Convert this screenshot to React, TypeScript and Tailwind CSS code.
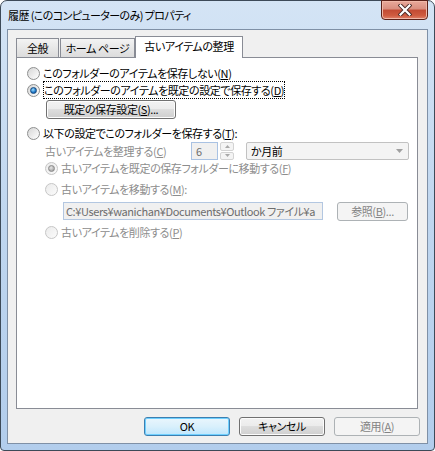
import React from "react";

const jp = "font-['Meiryo_UI','Noto_Sans_CJK_JP',sans-serif] [font-feature-settings:'palt']";

const Radio = ({ checked = false, disabled = false }: { checked?: boolean; disabled?: boolean }) => (
  <span
    className={
      disabled
        ? "w-[13px] h-[13px] rounded-full border border-[#c6c6c6] bg-gradient-to-br from-[#ebebeb] to-[#fbfbfb] flex items-center justify-center shrink-0"
        : "w-[13px] h-[13px] rounded-full border border-[#8e8f8f] bg-gradient-to-br from-[#d6d6d6] to-[#ffffff] flex items-center justify-center shrink-0"
    }
  >
    {checked && (
      <span
        className={
          disabled
            ? "w-[7px] h-[7px] rounded-full border border-[#8a8a8a] bg-[radial-gradient(circle_at_40%_35%,#e6e6e6,#8f8f8f)]"
            : "w-[7px] h-[7px] rounded-full border border-[#194a7e] bg-[radial-gradient(circle_at_40%_35%,#9fe0ff,#1b74c6_60%,#0f4f96)]"
        }
      />
    )}
  </span>
);

const Btn = ({ children, w, primary = false, disabled = false }: { children: React.ReactNode; w: string; primary?: boolean; disabled?: boolean }) => {
  if (disabled) {
    return (
      <div className={`${w} h-[19px] rounded-[3px] border border-[#adb2b5] bg-[#f4f4f4] text-[#838383] flex items-center justify-center whitespace-nowrap`}>
        {children}
      </div>
    );
  }
  return (
    <div
      className={
        primary
          ? `${w} h-[19px] rounded-[3px] border border-[#3c7fb1] bg-gradient-to-b from-[#eaf6fd] via-[#d9f0fc] to-[#bee6fd] shadow-[inset_0_0_0_1px_#6fd0ff] flex items-center justify-center whitespace-nowrap`
          : `${w} h-[19px] rounded-[3px] border border-[#707070] bg-[linear-gradient(#f2f2f2_0%,#ebebeb_49%,#dddddd_50%,#cfcfcf_100%)] shadow-[inset_0_0_0_1px_#fcfcfc] flex items-center justify-center whitespace-nowrap`
      }
    >
      {children}
    </div>
  );
};

const Row = ({ children, checked, disabled, className = "" }: { children: React.ReactNode; checked?: boolean; disabled?: boolean; className?: string }) => (
  <div className={`flex items-center h-[17px] gap-[3px] whitespace-nowrap ${className}`}>
    <Radio checked={checked} disabled={disabled} />
    <span className={disabled ? "text-[#8d8d8d] leading-[13px]" : "leading-[13px]"}>{children}</span>
  </div>
);

export default function App() {
  return (
    <div className={`w-[435px] h-[451px] bg-white ${jp} text-[11px] tracking-[-0.4px] text-black`}>
      <div className="w-[435px] h-[451px] flex flex-col rounded-t-[7px] rounded-b-[4px] border border-[#3d4a58] bg-gradient-to-b from-[#d4e4f5] via-[#bfd6ef] to-[#b2cdec]">
        {/* title bar */}
        <div className="h-[28px] relative shrink-0">
          <div className="pl-[7px] pt-[6px] text-[11px] tracking-[-0.6px] leading-[16px] text-black whitespace-nowrap">
            履歴 (このコンピューターのみ) プロパティ
          </div>
          <div className="absolute left-[380px] top-[-1px] w-[47px] h-[20px] rounded-b-[4px] border border-[#5b2119] bg-[linear-gradient(#e9a99b_0%,#d98e7e_45%,#c24a33_50%,#cf5b40_80%,#e0816a_100%)] shadow-[inset_0_0_0_1px_#f0b8a8] flex items-center justify-center">
            <svg width="14" height="12" viewBox="0 0 14 12">
              <path d="M2.5 1.5 L11.5 10.5 M11.5 1.5 L2.5 10.5" stroke="#4a2a26" strokeWidth="4" strokeLinecap="square" fill="none" />
              <path d="M2.5 1.5 L11.5 10.5 M11.5 1.5 L2.5 10.5" stroke="#ffffff" strokeWidth="2.2" strokeLinecap="square" fill="none" />
            </svg>
          </div>
        </div>

        {/* client area */}
        <div className="ml-[6px] w-[421px] h-[415px] border border-[#7f90a6] bg-[#f0f0f0] flex flex-col">
          <div className="pl-[8px] pt-[6px]">
            {/* tabs */}
            <div className="flex items-end h-[21px]">
              <div className="w-[43px] h-[19px] border border-b-0 border-[#898c95] bg-gradient-to-b from-[#f3f3f3] to-[#dcdcdc] flex items-center justify-center">
                全般
              </div>
              <div className="w-[75px] h-[19px] ml-[1px] border border-b-0 border-[#898c95] bg-gradient-to-b from-[#f3f3f3] to-[#dcdcdc] flex items-center justify-center whitespace-nowrap">
                ホーム ページ
              </div>
              <div className="w-[108px] h-[22px] -mb-[1px] relative z-10 border border-b-0 border-[#898c95] bg-white flex items-center justify-center pb-[2px] whitespace-nowrap">
                古いアイテムの整理
              </div>
            </div>

            {/* panel */}
            <div className="w-[402px] h-[352px] border border-[#898c95] bg-white pl-[10px] pt-[7px] flex flex-col">
              <Row>
                このフォルダーのアイテムを保存しない(<u>N</u>)
              </Row>
              <Row checked>
                <span className="border border-dotted border-black">
                  このフォルダーのアイテムを既定の設定で保存する(<u>D</u>)
                </span>
              </Row>
              <div className="mt-[1px] ml-[19px]">
                <Btn w="w-[130px]">
                  既定の保存設定(<u>S</u>)...
                </Btn>
              </div>
              <Row className="mt-[6px]">
                以下の設定でこのフォルダーを保存する(<u>T</u>):
              </Row>

              {/* age row */}
              <div className="flex items-center h-[18px] ml-[18px] text-[#8d8d8d]">
                <span className="w-[146px] whitespace-nowrap">
                  古いアイテムを整理する(<u>C</u>)
                </span>
                <div className="w-[27px] h-[18px] border border-[#a9c2e3] bg-[#f0f0f0] pl-[4px] leading-[16px] text-[#6d6d6d]">6</div>
                <div className="ml-[2px] w-[14px] h-[18px] flex flex-col gap-[1px]">
                  <div className="flex-1 border border-[#d3d3d3] rounded-[2px] bg-[#f4f4f4] flex items-center justify-center">
                    <svg width="5" height="3" viewBox="0 0 5 3"><path d="M0 3 L2.5 0 L5 3Z" fill="#a8a8a8" /></svg>
                  </div>
                  <div className="flex-1 border border-[#d3d3d3] rounded-[2px] bg-[#f4f4f4] flex items-center justify-center">
                    <svg width="5" height="3" viewBox="0 0 5 3"><path d="M0 0 L2.5 3 L5 0Z" fill="#a8a8a8" /></svg>
                  </div>
                </div>
                <div className="ml-[12px] w-[163px] h-[18px] border border-[#c2c2c2] rounded-[2px] bg-[#f4f4f4] flex items-center justify-between pl-[4px] pr-[5px] text-black">
                  <span>か月前</span>
                  <svg width="7" height="4" viewBox="0 0 7 4"><path d="M0 0 L3.5 4 L7 0Z" fill="#a0a0a0" /></svg>
                </div>
              </div>

              <Row checked disabled className="ml-[18px]">
                古いアイテムを既定の保存フォルダーに移動する(<u>F</u>)
              </Row>
              <Row disabled className="ml-[18px] mt-[4px]">
                古いアイテムを移動する(<u>M</u>):
              </Row>
              <div className="flex items-center h-[18px] mt-[4px] ml-[36px]">
                <div className="w-[260px] h-[18px] border border-[#b3c7e1] bg-[#f0f0f0] pl-[2px] leading-[16px] text-[#6d6d6d] overflow-hidden whitespace-nowrap">
                  C:¥Users¥wanichan¥Documents¥Outlook ファイル¥a
                </div>
                <div className="ml-[14px]">
                  <Btn w="w-[71px]" disabled>
                    参照(<u>B</u>)...
                  </Btn>
                </div>
              </div>
              <Row disabled className="ml-[18px] mt-[4px]">
                古いアイテムを削除する(<u>P</u>)
              </Row>
            </div>
          </div>

          {/* bottom buttons */}
          <div className="flex justify-end gap-[9px] pr-[7px] mt-[8px]">
            <Btn w="w-[86px]" primary>
              OK
            </Btn>
            <Btn w="w-[86px]">キャンセル</Btn>
            <Btn w="w-[86px]" disabled>
              適用(<u>A</u>)
            </Btn>
          </div>
        </div>
      </div>
    </div>
  );
}
